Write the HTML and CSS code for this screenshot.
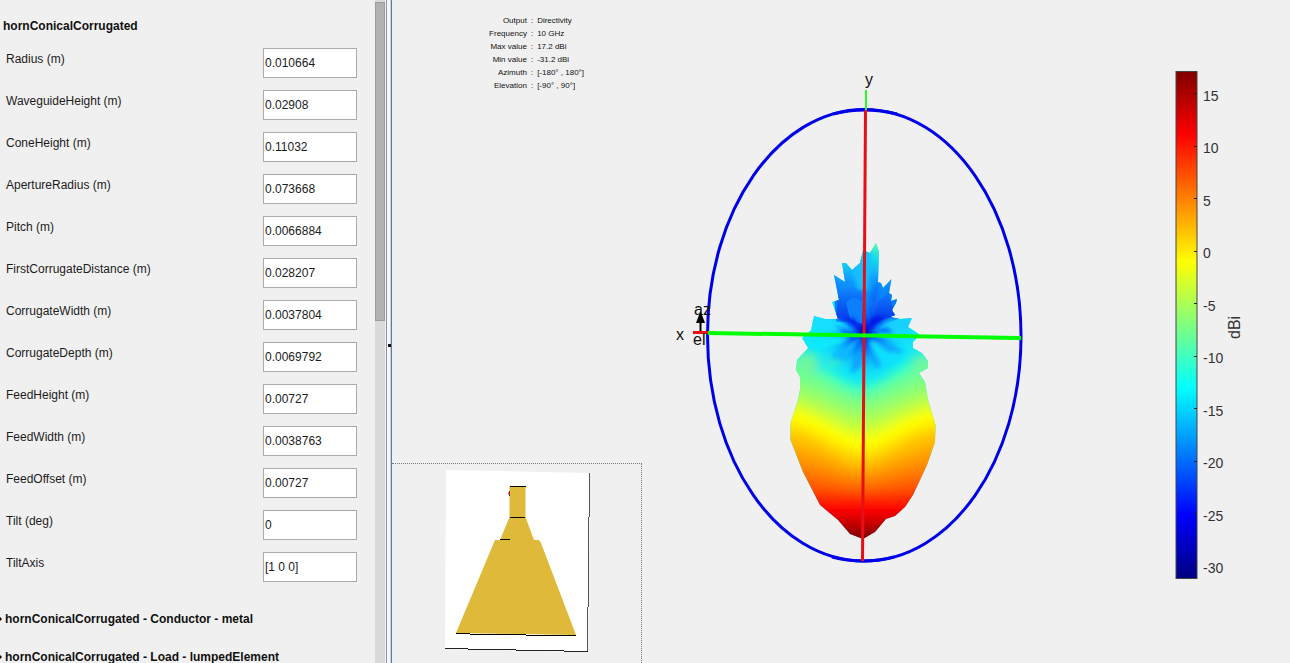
FILE: index.html
```html
<!DOCTYPE html>
<html lang="en">
<head>
<meta charset="utf-8">
<title>Antenna Designer</title>
<link rel="stylesheet" href="styles.css">
</head>
<body>
<div class="app">
  <aside class="side">
    <form class="props">
      <h2 class="group-title">hornConicalCorrugated</h2>
      <div class="row"><label for="f1">Radius (m)</label><input id="f1" type="text" value="0.010664"></div>
      <div class="row"><label for="f2">WaveguideHeight (m)</label><input id="f2" type="text" value="0.02908"></div>
      <div class="row"><label for="f3">ConeHeight (m)</label><input id="f3" type="text" value="0.11032"></div>
      <div class="row"><label for="f4">ApertureRadius (m)</label><input id="f4" type="text" value="0.073668"></div>
      <div class="row"><label for="f5">Pitch (m)</label><input id="f5" type="text" value="0.0066884"></div>
      <div class="row"><label for="f6">FirstCorrugateDistance (m)</label><input id="f6" type="text" value="0.028207"></div>
      <div class="row"><label for="f7">CorrugateWidth (m)</label><input id="f7" type="text" value="0.0037804"></div>
      <div class="row"><label for="f8">CorrugateDepth (m)</label><input id="f8" type="text" value="0.0069792"></div>
      <div class="row"><label for="f9">FeedHeight (m)</label><input id="f9" type="text" value="0.00727"></div>
      <div class="row"><label for="f10">FeedWidth (m)</label><input id="f10" type="text" value="0.0038763"></div>
      <div class="row"><label for="f11">FeedOffset (m)</label><input id="f11" type="text" value="0.00727"></div>
      <div class="row"><label for="f12">Tilt (deg)</label><input id="f12" type="text" value="0"></div>
      <div class="row"><label for="f13">TiltAxis</label><input id="f13" type="text" value="[1 0 0]"></div>
      <button class="section" type="button"><svg class="arrow" viewBox="0 0 3 8"><path d="M0 2L2 4L0 6Z"/></svg>hornConicalCorrugated - Conductor - metal</button>
      <button class="section" type="button"><svg class="arrow" viewBox="0 0 3 8"><path d="M0 2L2 4L0 6Z"/></svg>hornConicalCorrugated - Load - lumpedElement</button>
    </form>
    <div class="scroll"><div class="thumb"></div></div>
  </aside>
  <div class="divider"><span class="grip"></span></div>
  <main class="plot">
    <div class="plot-left">
      <table class="info">
        <tbody>
          <tr><th>Output</th><td>:</td><td>Directivity</td></tr>
          <tr><th>Frequency</th><td>:</td><td>10 GHz</td></tr>
          <tr><th>Max value</th><td>:</td><td>17.2 dBi</td></tr>
          <tr><th>Min value</th><td>:</td><td>-31.2 dBi</td></tr>
          <tr><th>Azimuth</th><td>:</td><td>[-180° , 180°]</td></tr>
          <tr><th>Elevation</th><td>:</td><td>[-90° , 90°]</td></tr>
        </tbody>
      </table>
      <div class="inset">
        <svg class="inset-art" viewBox="392 464 249 199">
          <path d="M446 470L590 473L588 652L445 649Z" fill="#fff"/>
          <path d="M589.500 473V517M588.500 517V607M587.500 607V652" stroke="#555" fill="none"/>
          <path d="M445 648.500H468M468 649.500H516M516 650.500H564M564 651.500H588" stroke="#222"/>
          <path d="M509.500 486H525.500V517L534 540H539L541 543L576 635L456 633L495 540H500L509.500 517Z" fill="#deb93a"/>
          <path d="M510 486.500H526M510 517.500H525M500 539.500H510M456 633.500H470M470 634.500H526M526 635.500H576" stroke="#000"/>
          <path d="M509.500 491V496" stroke="#422"/><path d="M508 493.500H510" stroke="#e03030" stroke-width="2"/>
        </svg>
      </div>
    </div>
    <svg class="pattern" viewBox="642 0 518 663" role="img" aria-label="Directivity pattern">
      <defs>
        <clipPath id="shape"><path d="M876 243L879 252L878 282L881 283L883 288L891.500 279L889 293L892 295L891 301L897 299L896 303L892 310L895 315L890 317L900 319L912 318L908 327L916 332L920 335L913 342L913 348L922 353L928 361L928 368L919 373L925 382L928 400L935.500 425L935 442L927 465L913 495L905 507L895 516L886 519L875 532L863 539L850 534L838 520L820 505L803 472L790.500 440L790.500 423L798 400L800 390L800 377L796 370L797 360L808 348L802 338L811 330L814 316L825 319L838 319L832 302L839 300L834 275L845 282L842 263L846 263L852 270L860 263L863 250L870 253Z"/></clipPath>
        <filter id="soft" x="-20%" y="-20%" width="140%" height="140%"><feGaussianBlur stdDeviation="5"/></filter>
        <filter id="fine" x="-30%" y="-30%" width="160%" height="160%"><feGaussianBlur stdDeviation="2"/></filter>
        <linearGradient id="tower" gradientUnits="userSpaceOnUse" x1="0" y1="243" x2="0" y2="320">
          <stop offset="0" stop-color="#58f8b0"/><stop offset="0.2" stop-color="#18ddea"/><stop offset="0.45" stop-color="#12a0ff"/><stop offset="0.7" stop-color="#0868f8"/><stop offset="1" stop-color="#0440f0"/>
        </linearGradient>
        <linearGradient id="facet" gradientUnits="userSpaceOnUse" x1="0" y1="284" x2="0" y2="322">
          <stop offset="0" stop-color="#1090ff"/><stop offset="1" stop-color="#0434ec"/>
        </linearGradient>
        <radialGradient id="core" gradientUnits="userSpaceOnUse" cx="864" cy="333" r="54">
          <stop offset="0" stop-color="#0008c8"/><stop offset="0.2" stop-color="#0040f4"/><stop offset="0.45" stop-color="#0888ff" stop-opacity="0.7"/><stop offset="0.75" stop-color="#08c8ff" stop-opacity="0.3"/><stop offset="1" stop-color="#10f0ff" stop-opacity="0"/>
        </radialGradient>
      </defs>
      <g clip-path="url(#shape)">
        <rect x="780" y="240" width="165" height="305" fill="#12eaf5"/>
        <g filter="url(#soft)">
          <path d="M770 348C815 348 838 385 862 385S910 348 955 348V570H770Z" fill="#40ffbf"/>
          <path d="M770 361C815 361 838 394 862 394S910 361 955 361V570H770Z" fill="#70ff90"/>
          <path d="M770 378C815 378 838 404 862 404S910 378 955 378V570H770Z" fill="#90ff70"/>
          <path d="M770 390C815 390 838 416 862 416S910 390 955 390V570H770Z" fill="#b4ff4c"/>
          <path d="M770 400C815 400 838 428 862 428S910 400 955 400V570H770Z" fill="#dcff24"/>
          <path d="M770 408C815 408 838 438 862 438S910 408 955 408V570H770Z" fill="#ff0"/>
          <path d="M770 420C815 420 838 450 862 450S910 420 955 420V570H770Z" fill="#ffdf00"/>
          <path d="M770 430C815 430 838 460 862 460S910 430 955 430V570H770Z" fill="#ffbf00"/>
          <path d="M770 445C815 445 838 469 862 469S910 445 955 445V570H770Z" fill="#ff9f00"/>
          <path d="M770 460C815 460 838 477 862 477S910 460 955 460V570H770Z" fill="#ff8000"/>
          <path d="M770 474C815 474 838 485 862 485S910 474 955 474V570H770Z" fill="#ff6000"/>
          <path d="M770 486C815 486 838 493 862 493S910 486 955 486V570H770Z" fill="#ff4000"/>
          <path d="M770 496H955V570H770Z" fill="#ff2000"/>
          <path d="M770 504H955V570H770Z" fill="#f00"/>
          <path d="M770 514H955V570H770Z" fill="#df0000"/>
          <path d="M770 521H955V570H770Z" fill="#bf0000"/>
          <path d="M770 528H955V570H770Z" fill="#a00000"/>
          <path d="M770 534H955V570H770Z" fill="#800000"/>
          <circle cx="808" cy="363" r="11" fill="#70f5a0"/><circle cx="921" cy="363" r="9" fill="#70f5a0"/>
          <circle cx="821" cy="366" r="5" fill="#20e8e8"/><ellipse cx="835" cy="361" rx="8" ry="4" fill="#60f5a8"/>
        </g>
        <path d="M830 240H900V318L864 334L836 320Z" fill="url(#tower)"/>
        <circle cx="864" cy="333" r="54" fill="url(#core)"/>
        <path d="M838 290Q850 284 862 290V322H836Z" fill="url(#facet)"/>
        <path d="M846 303Q853 294 862 301V324L850 319Z" fill="#0c80fc"/>
        <path d="M869 308L889 293L893 308L896 316L872 323Z" fill="url(#facet)"/>
        <g filter="url(#fine)">
          <path d="M858 333L840 321L812 314V331Z" fill="#12e0ff"/>
          <path d="M872 332L888 321L914 316L910 330Z" fill="#12d0ff"/>
          <path d="M874 335L894 328L920 335L908 344Z" fill="#14dcff"/>
          <path d="M850 337L802 338L815 350L840 344Z" fill="#10e8ff"/>
          <path d="M868 340L882 366L900 360L890 346Z" fill="#10e0ff"/>
          <path d="M866 338L876 368L881 364Z" fill="#08a0ff"/>
          <path d="M862 337L850 374L861 366Z" fill="#08a0ff"/>
          <path d="M862 336L830 357L846 359Z" fill="#08b8ff"/>
          <path d="M866 336L906 352L888 352Z" fill="#08a0ff"/>
          <path d="M852 270L860 263L863 250L872 252L868 290L858 290Z" fill="#14c0ff"/>
          <path d="M870 300L878 280V305L870 318Z" fill="#0868f8"/>
          <path d="M864 334L872 316L887 318Z" fill="#0018e8"/>
          <path d="M864 334L845 322L853 317Z" fill="#0028f0"/>
          <path d="M864 334L834 325L845 334Z" fill="#0060ff"/>
          <path d="M864 334L895 333L886 327Z" fill="#0060ff"/>
          <circle cx="864" cy="333" r="7" fill="#000cd0"/>
        </g>
      </g>
      <path d="M864.500 109.500C951 109.500 1021 211 1021 336S951 561 864 561S707.500 460 707.500 335S778 109.500 864.500 109.500Z" fill="none" stroke="#0000e8" stroke-width="3"/>
      <path d="M833 114Q864 106 897 114M832 557Q863 565 894 557" fill="none" stroke="#0000e8" stroke-width="3"/>
      <path d="M866 90V110" stroke="#2f2" stroke-width="2"/>
      <path d="M865.500 110L862.500 561" stroke="#e60f17" stroke-width="3"/>
      <path d="M708 333L1021 338" stroke="#0f0" stroke-width="4"/>
      <path d="M693 332.500H708" stroke="#f01010" stroke-width="3"/>
      <path d="M700.500 331V316" stroke="#000" stroke-width="2"/><path d="M700.500 311L705 323H696Z"/>
      <text class="axis" x="865" y="85">y</text>
      <text class="axis" x="676" y="340">x</text>
      <text class="axis" x="694" y="315">az</text>
      <text class="axis" x="693" y="345">el</text>
    </svg>
    <svg class="colorbar" viewBox="1160 0 130 663" role="img" aria-label="Color scale in dBi">
      <defs><linearGradient id="jet" x1="0" y1="0" x2="0" y2="1">
        <stop offset="0" stop-color="#800000"/><stop offset="0.125" stop-color="#f00"/><stop offset="0.375" stop-color="#ff0"/><stop offset="0.625" stop-color="#0ff"/><stop offset="0.875" stop-color="#00f"/><stop offset="1" stop-color="#000080"/>
      </linearGradient></defs>
      <rect x="1176" y="71.500" width="21" height="507" fill="url(#jet)" stroke="#444"/>
      <path d="M1194 93.500H1197M1194 146.500H1197M1194 198.500H1197M1194 251.500H1197M1194 303.500H1197M1194 356.500H1197M1194 408.500H1197M1194 461.500H1197M1194 513.500H1197M1194 566.500H1197" stroke="#222"/>
      <g class="tick">
        <text x="1203" y="101">15</text><text x="1203" y="153">10</text><text x="1203" y="206">5</text><text x="1203" y="258">0</text><text x="1203" y="311">-5</text><text x="1203" y="363">-10</text><text x="1203" y="416">-15</text><text x="1203" y="468">-20</text><text x="1203" y="521">-25</text><text x="1203" y="573">-30</text>
      </g>
      <text class="unit" transform="translate(1240 339) rotate(-90)">dBi</text>
    </svg>
  </main>
</div>
</body>
</html>
```
FILE: styles.css
```css
* { box-sizing: border-box; }
body {
  margin: 0;
  background: #f0f0f0;
  color: #1c1c1c;
  font-family: "Liberation Sans Narrow", "Liberation Sans", Arial, sans-serif;
  font-size: 12px;
}
.app { display: flex; height: 100vh; overflow: hidden; }
.side { display: flex; flex: 0 0 30%; min-width: 320px; max-width: 385px; }
.props { flex: 1; overflow: hidden; padding-top: 16px; }
.group-title { margin: 0 0 12px; padding-left: 3px; font-size: 12px; line-height: 20px; color: #111; }
.row { display: flex; justify-content: space-between; align-items: flex-start; height: 42px; padding: 0 18px 0 6px; }
.row label { line-height: 22px; }
.row input {
  width: 94px;
  height: 30px;
  padding: 0 1px;
  border: 1px solid #ababab;
  border-radius: 0;
  background: #fff;
  color: inherit;
  font: inherit;
}
.section {
  display: flex;
  align-items: center;
  gap: 2px;
  height: 38px;
  padding: 0;
  border: 0;
  background: none;
  color: #111;
  font: inherit;
  font-weight: bold;
  white-space: nowrap;
}
.row + .section { margin-top: 6px; }
.arrow { width: 3px; height: 8px; }
.scroll { flex: 0 0 10px; padding-top: 2px; background: #dadada; }
.thumb { height: 319px; border: 1px solid #9c9c9c; background: #b1b1b1; }
.divider {
  display: flex;
  flex: 0 0 7px;
  align-items: center;
  justify-content: flex-end;
  border-left: 1px solid #f0f0f0;
  border-right: 1px solid #5580a0;
  background: linear-gradient(to right, #8e939c 0 1px, #f7f7f7 1px 4px, #c3d2e0 4px 5px);
}
.grip { width: 3px; height: 3px; margin-top: 28px; background: #111; }
.plot { display: grid; flex: 1; grid-template-columns: 250px 1fr 130px; min-width: 0; }
.plot-left { display: flex; flex-direction: column; justify-content: space-between; min-height: 0; }
.info { align-self: flex-end; margin: 14px 58px 0 0; border-collapse: collapse; font-size: 8px; line-height: 13px; color: #111; }
.info th { padding: 0; font-weight: normal; text-align: right; }
.info td { padding: 0 0 0 4px; white-space: nowrap; }
.inset { border-top: 1px dotted #777; border-right: 1px dotted #777; }
.inset-art { display: block; width: 100%; }
.pattern, .colorbar { display: block; width: 100%; height: 100vh; }
.axis { font-size: 16px; fill: #111; }
.tick { font-size: 14px; fill: #333; }
.unit { font-size: 16px; fill: #333; }
```
